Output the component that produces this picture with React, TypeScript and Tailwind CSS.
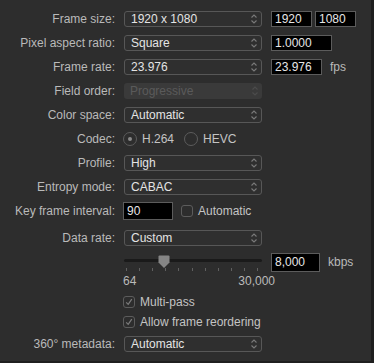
import React from "react";

const Chevrons = ({ dim }: { dim?: boolean }) => (
  <svg width="8" height="12" viewBox="0 0 8 12">
    <path
      d="M1.5 4.5 L4 2 L6.5 4.5 M1.5 7.5 L4 10 L6.5 7.5"
      fill="none"
      stroke={dim ? "#4c4c4c" : "#7a7a7a"}
      strokeWidth="1.1"
    />
  </svg>
);

function Popup({ value, disabled }: { value: string; disabled?: boolean }) {
  return (
    <div
      className={`ml-[1px] w-[138px] h-[16px] rounded-[3px] flex items-center justify-between pl-[6px] pr-[3px] ${
        disabled ? "bg-[#3a3a3a] text-[#5a5a5a]" : "border border-[#575757] bg-[#2f2f2f] text-[#e4e4e4]"
      }`}
    >
      <span className="leading-none">{value}</span>
      <Chevrons dim={disabled} />
    </div>
  );
}

function Field({ value, w, h = 16 }: { value: string; w: string; h?: number }) {
  return (
    <div
      className={`${w} ${h === 16 ? "h-[16px]" : h === 18 ? "h-[18px]" : "h-[19px]"} bg-black border border-[#5c5c5c] text-[#e6e6e6] flex items-center pl-[3px] leading-none`}
    >
      {value}
    </div>
  );
}

function Row({
  label,
  children,
  className = "",
}: {
  label?: string;
  children?: React.ReactNode;
  className?: string;
}) {
  return (
    <div className={`flex h-[24px] items-center ${className}`}>
      <div className="w-[115px] text-right text-[#bababa] leading-none shrink-0">{label}</div>
      <div className="ml-[8px] flex items-center">{children}</div>
    </div>
  );
}

const Check = ({ checked }: { checked?: boolean }) => (
  <div className="w-[12px] h-[12px] rounded-[3px] border border-[#5c5c5c] flex items-center justify-center">
    {checked && (
      <svg width="10" height="10" viewBox="0 0 10 10">
        <path d="M2.2 5.3 L4.2 7.4 L7.8 2.2" fill="none" stroke="#7c7c7c" strokeWidth="1.2" />
      </svg>
    )}
  </div>
);

const Radio = ({ selected }: { selected?: boolean }) => (
  <div className="w-[14px] h-[14px] rounded-full border border-[#5c5c5c] flex items-center justify-center">
    {selected && <div className="w-[4px] h-[4px] rounded-full bg-[#8a8a8a]" />}
  </div>
);

export default function App() {
  const ticks = Array.from({ length: 11 }, (_, i) => 3 + i * 13.1);
  return (
    <div
      className="w-[374px] h-[363px] bg-[#1f1f1f] text-[12px]"
      style={{ fontFamily: '"Liberation Sans", Arial, sans-serif' }}
    >
      <div className="w-[371px] h-[361px] bg-[#2d2d2d] pt-[7px] flex flex-col">
        <Row label="Frame size:">
          <Popup value="1920 x 1080" />
          <div className="ml-[9px] flex gap-[3px]">
            <Field value="1920" w="w-[41px]" />
            <Field value="1080" w="w-[41px]" />
          </div>
        </Row>
        <Row label="Pixel aspect ratio:">
          <Popup value="Square" />
          <div className="ml-[9px]">
            <Field value="1.0000" w="w-[61px]" />
          </div>
        </Row>
        <Row label="Frame rate:">
          <Popup value="23.976" />
          <div className="ml-[9px]">
            <Field value="23.976" w="w-[51px]" />
          </div>
          <span className="ml-[8px] text-[#bababa] leading-none">fps</span>
        </Row>
        <Row label="Field order:">
          <Popup value="Progressive" disabled />
        </Row>
        <Row label="Color space:">
          <Popup value="Automatic" />
        </Row>
        <Row label="Codec:">
          <Radio selected />
          <span className="ml-[5px] text-[#c4c4c4] leading-none">H.264</span>
          <div className="ml-[10px]">
            <Radio />
          </div>
          <span className="ml-[5px] text-[#c4c4c4] leading-none">HEVC</span>
        </Row>
        <Row label="Profile:">
          <Popup value="High" />
        </Row>
        <Row label="Entropy mode:">
          <Popup value="CABAC" />
        </Row>
        <Row label="Key frame interval:">
          <Field value="90" w="w-[50px]" h={18} />
          <div className="ml-[8px]">
            <Check />
          </div>
          <span className="ml-[5px] text-[#c4c4c4] leading-none">Automatic</span>
        </Row>
        <Row label="Data rate:" className="mt-[3px]">
          <Popup value="Custom" />
        </Row>
        <Row>
          <div className="relative w-[139px] h-[24px]">
            <div className="absolute left-[1px] right-0 top-[9px] h-[3px] rounded-full bg-[#1a1a1a]" />
            {ticks.map((x, i) => (
              <div
                key={i}
                className="absolute top-[18px] w-[1px] h-[3px] bg-[#606060]"
                style={{ left: `${x}px` }}
              />
            ))}
            <svg className="absolute left-[35px] top-[5px]" width="12" height="14" viewBox="0 0 12 14">
              <path
                d="M1.5 0.5 H10.5 Q11.5 0.5 11.5 1.5 V7.5 L6 13 L0.5 7.5 V1.5 Q0.5 0.5 1.5 0.5 Z"
                fill="#858585"
              />
            </svg>
          </div>
          <div className="ml-[9px]">
            <Field value="8,000" w="w-[49px]" h={19} />
          </div>
          <span className="ml-[8px] text-[#bababa] leading-none">kbps</span>
        </Row>
        <div className="flex h-[14px] items-center">
          <div className="ml-[123px] w-[152px] flex justify-between text-[#bababa] leading-none">
            <span>64</span>
            <span>30,000</span>
          </div>
        </div>
        <Row className="mt-[4px] !h-[20px]">
          <Check checked />
          <span className="ml-[5px] text-[#c4c4c4] leading-none">Multi-pass</span>
        </Row>
        <Row className="!h-[20px]">
          <Check checked />
          <span className="ml-[5px] text-[#c4c4c4] leading-none">Allow frame reordering</span>
        </Row>
        <Row label="360° metadata:">
          <Popup value="Automatic" />
        </Row>
      </div>
    </div>
  );
}
